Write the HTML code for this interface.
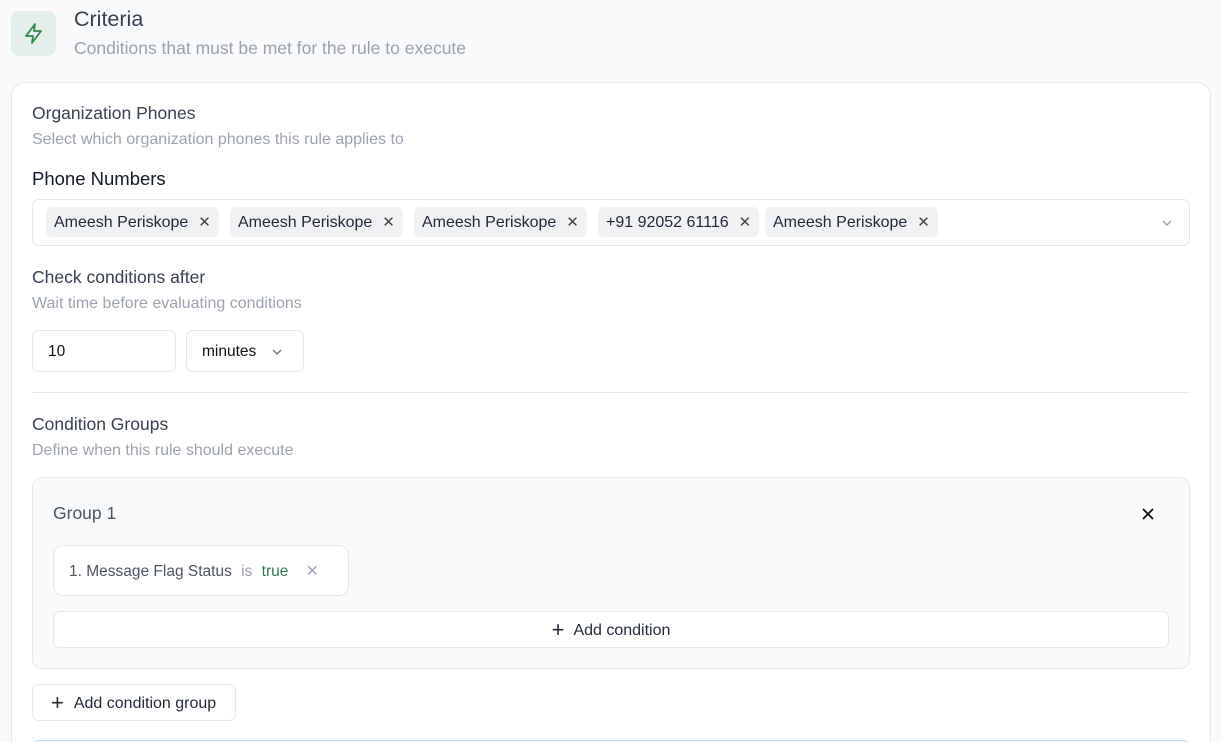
<!DOCTYPE html><html><head><style>
*{box-sizing:border-box;margin:0;padding:0}
html,body{width:1221px;height:742px;overflow:hidden}
body{background:#f9fafb;font-family:"Liberation Sans",sans-serif;color:#374151;position:relative}
.a{position:absolute}
.icon{left:11px;top:11px;width:45px;height:45px;border-radius:8px;background:#e5efe9}
.card{left:11px;top:82px;width:1200px;height:670px;background:#fff;border:1px solid #e5e7eb;border-radius:14px}
.t{font-size:17.5px;color:#374151}
.s{font-size:16px;color:#9ca3af}
.box{border:1px solid #e5e7eb;border-radius:7px;background:#fff}
.chip{position:absolute;top:7px;height:30px;background:#f1f2f4;border-radius:6px;font-size:16px;color:#1f2937;padding:6px 8px;white-space:nowrap}
.chip b{font-weight:normal;margin-left:10px;color:#444;font-size:15px}
</style></head><body>
<div class="a icon"><svg width="45" height="45" viewBox="0 0 45 45"><path d="M24 13 L15 25 H22 L21 32 L30 20 H23 Z" fill="none" stroke="#2f8a4f" stroke-width="1.8" stroke-linejoin="round"/></svg></div>
<div class="a" style="left:74px;top:7px;font-size:21.5px;color:#374151">Criteria</div>
<div class="a s" style="left:74px;top:38px;font-size:17.5px">Conditions that must be met for the rule to execute</div>
<div class="a card"></div>
<div class="a t" style="left:32px;top:103px">Organization Phones</div>
<div class="a s" style="left:32px;top:131px">Select which organization phones this rule applies to</div>
<div class="a" style="left:32px;top:168px;font-size:18.5px;color:#111827">Phone Numbers</div>
<div class="a box" style="left:32px;top:199px;width:1158px;height:47px">
<div class="chip" style="left:13px">Ameesh Periskope<b>✕</b></div>
<div class="chip" style="left:197px">Ameesh Periskope<b>✕</b></div>
<div class="chip" style="left:381px">Ameesh Periskope<b>✕</b></div>
<div class="chip" style="left:565px">+91 92052 61116<b>✕</b></div>
<div class="chip" style="left:732px">Ameesh Periskope<b>✕</b></div>
<svg class="a" style="left:1128px;top:18px" width="12" height="10"><path d="M2 3 L6 7 L10 3" fill="none" stroke="#9ca3af" stroke-width="1.4"/></svg>
</div>
<div class="a t" style="left:32px;top:267px">Check conditions after</div>
<div class="a s" style="left:32px;top:295px">Wait time before evaluating conditions</div>
<div class="a box" style="left:32px;top:330px;width:144px;height:42px;font-size:15.5px;color:#111;padding:12px 15px">10</div>
<div class="a box" style="left:186px;top:330px;width:118px;height:42px;font-size:15.5px;color:#111;padding:12px 15px">minutes<svg style="position:absolute;left:84px;top:16px" width="12" height="10"><path d="M2 3 L6 7 L10 3" fill="none" stroke="#6b7280" stroke-width="1.4"/></svg></div>
<div class="a" style="left:32px;top:392px;width:1158px;height:1px;background:#e5e7eb"></div>
<div class="a t" style="left:32px;top:414px">Condition Groups</div>
<div class="a s" style="left:32px;top:442px">Define when this rule should execute</div>
<div class="a" style="left:32px;top:477px;width:1158px;height:192px;background:#f9fafb;border:1px solid #e5e7eb;border-radius:10px"></div>
<div class="a t" style="left:53px;top:503px;color:#4b5563">Group 1</div>
<svg class="a" style="left:1141px;top:507px" width="14" height="14"><path d="M2 2L12 12M12 2L2 12" stroke="#111" stroke-width="1.8"/></svg>
<div class="a box" style="left:53px;top:545px;width:296px;height:51px;border-radius:10px;font-size:15.5px;padding:16px 15px;color:#4b5563;white-space:nowrap">1. Message Flag Status <span style="color:#9ca3af;margin-left:5px">is</span> <span style="color:#2f7a4f;margin-left:5px">true</span> <span style="color:#9ca3af;margin-left:13px">✕</span></div>
<div class="a box" style="left:53px;top:611px;width:1116px;height:37px;font-size:16px;color:#1f2937;text-align:center;padding-top:8px"><span style="font-size:22px;position:relative;top:2px;margin-right:9px;line-height:16px">+</span>Add condition</div>
<div class="a box" style="left:32px;top:684px;width:204px;height:37px;font-size:16px;color:#1f2937;padding:8px 0 0 18px;white-space:nowrap"><span style="font-size:22px;position:relative;top:2px;margin-right:10px;line-height:16px">+</span>Add condition group</div>
<div class="a" style="left:33px;top:740px;width:1156px;height:10px;border:1px solid #bfdbfe;background:#eff6ff;border-radius:8px"></div>
</body></html>
